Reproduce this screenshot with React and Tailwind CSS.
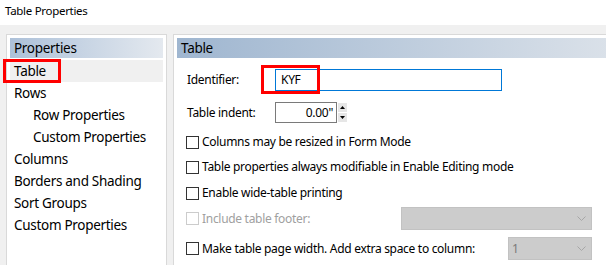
import React from "react";

const Chevron = () => (
  <svg width="9" height="5" viewBox="0 0 9 5" className="block">
    <path d="M0.5 0.5 L4.5 4.5 L8.5 0.5" fill="none" stroke="#a6a6a6" strokeWidth="1" />
  </svg>
);

const Check = ({ disabled }) => (
  <span
    className={
      "block w-[13px] h-[13px] shrink-0 border bg-white " +
      (disabled ? "border-[#cccccc]" : "border-[#333333]")
    }
  />
);

export default function App() {
  const items = [
    { t: "Table", sel: true },
    { t: "Rows" },
    { t: "Row Properties", sub: true },
    { t: "Custom Properties", sub: true },
    { t: "Columns" },
    { t: "Borders and Shading" },
    { t: "Sort Groups" },
    { t: "Custom Properties" },
  ];
  return (
    <div
      className="relative w-[606px] h-[265px] overflow-hidden bg-[#f0f0f0] text-black"
      style={{ fontFamily: '"Noto Sans", "Segoe UI", sans-serif' }}
    >
      <div className="h-[25px] bg-white pl-[5px] text-[11.5px] tracking-[-0.3px] leading-[22px]">Table Properties</div>
      <div className="flex pt-[9px] pl-[6px] gap-[6px] h-[240px]">
        {/* Left panel */}
        <div className="w-[161px] shrink-0 h-[260px] border border-[#d9d9d9] bg-white p-[3px]">
          <div className="h-[20px] pl-[4px] text-[13.5px] tracking-[-0.3px] leading-[20px] bg-gradient-to-r from-[#adc1d9] to-[#e4e9ef]">
            Properties
          </div>
          <div className="mt-[2px] text-[13.5px] tracking-[-0.3px]">
            {items.map((it, i) => (
              <div
                key={i}
                className={
                  "h-[22px] leading-[22px] whitespace-nowrap " +
                  (it.sub ? "pl-[23px] " : "pl-[4px] ") +
                  (it.sel ? "bg-[#f0f0f0]" : "")
                }
              >
                {it.t}
              </div>
            ))}
          </div>
        </div>
        {/* Right panel */}
        <div className="w-[460px] shrink-0 h-[260px] border border-[#d9d9d9] bg-white p-[3px]">
          <div className="h-[20px] pl-[4px] text-[13.5px] tracking-[-0.3px] leading-[20px] bg-gradient-to-r from-[#9fb6d0] to-[#dde3ea]">
            Table
          </div>
          <div className="w-[406px] ml-[9px] text-[12px] tracking-[-0.3px]">
            <div className="flex items-center h-[22px] mt-[11px]">
              <span className="w-[89px] pl-[1px]">Identifier:</span>
              <div className="w-[227px] h-[22px] border border-[#0078d7] pl-[5px] leading-[20px]">
                KYF
              </div>
            </div>
            <div className="flex items-center h-[21px] mt-[11px]">
              <span className="w-[89px] pl-[1px]">Table indent:</span>
              <div className="w-[62px] h-[21px] border border-[#7a7a7a] pr-[3px] text-right leading-[19px]">
                0.00"
              </div>
              <div className="ml-[1px] flex flex-col gap-[1px]">
                <div className="w-[9px] h-[9px] bg-[#e6e6e6] flex items-center justify-center">
                  <svg width="5" height="3" viewBox="0 0 5 3"><path d="M0 3 L2.5 0 L5 3Z" fill="#000" /></svg>
                </div>
                <div className="w-[9px] h-[9px] bg-[#e6e6e6] flex items-center justify-center">
                  <svg width="5" height="3" viewBox="0 0 5 3"><path d="M0 0 L2.5 3 L5 0Z" fill="#000" /></svg>
                </div>
              </div>
            </div>
            <div className="flex items-center h-[22px] mt-[8px] gap-[3px]">
              <Check />
              <span>Columns may be resized in Form Mode</span>
            </div>
            <div className="flex items-center h-[22px] mt-[3px] gap-[3px]">
              <Check />
              <span>Table properties always modifiable in Enable Editing mode</span>
            </div>
            <div className="flex items-center h-[22px] mt-[4px] gap-[3px]">
              <Check />
              <span>Enable wide-table printing</span>
            </div>
            <div className="flex items-center h-[23px] mt-[3px] gap-[3px]">
              <Check disabled />
              <span className="text-[#a0a0a0]">Include table footer:</span>
              <div className="ml-auto w-[191px] h-[23px] bg-[#cccccc] border border-[#c2c2c2] flex items-center justify-end pr-[5px]">
                <Chevron />
              </div>
            </div>
            <div className="flex items-center h-[23px] mt-[7px] gap-[3px]">
              <Check />
              <span>Make table page width. Add extra space to column:</span>
              <div className="ml-auto w-[84px] h-[23px] bg-[#cccccc] border border-[#c2c2c2] flex items-center justify-between pl-[3px] pr-[5px] text-[#7a7a7a]">
                <span>1</span>
                <Chevron />
              </div>
            </div>
          </div>
        </div>
      </div>
      {/* annotation boxes */}
      <div className="absolute left-[3px] top-[59px] w-[58px] h-[24px] border-[3px] border-[#ff0000]" />
      <div className="absolute left-[261px] top-[65px] w-[59px] h-[29px] border-[3px] border-[#ff0000]" />
    </div>
  );
}
